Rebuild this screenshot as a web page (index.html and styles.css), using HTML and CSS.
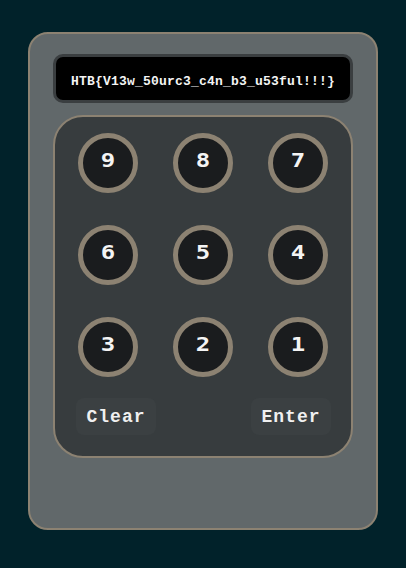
FILE: index.html
```html
<!DOCTYPE html>
<html>
<head>
<meta charset="utf-8">
<link rel="stylesheet" href="styles.css">
</head>
<body>
<div class="device">
  <div class="display"><span class="flag">HTB{V13w_50urc3_c4n_b3_u53ful!!!}</span></div>
  <div class="pad">
    <div class="keys">
      <button class="key"><span class="digit">9</span></button>
      <button class="key"><span class="digit">8</span></button>
      <button class="key"><span class="digit">7</span></button>
      <button class="key"><span class="digit">6</span></button>
      <button class="key"><span class="digit">5</span></button>
      <button class="key"><span class="digit">4</span></button>
      <button class="key"><span class="digit">3</span></button>
      <button class="key"><span class="digit">2</span></button>
      <button class="key"><span class="digit">1</span></button>
    </div>
    <div class="actions">
      <button class="action">Clear</button>
      <button class="action">Enter</button>
    </div>
  </div>
</div>
</body>
</html>
```
FILE: styles.css
```css
html, body {
  margin: 0;
  padding: 0;
  background: #01222a;
}
body {
  height: 568px;
  overflow: hidden;
}
.device {
  box-sizing: border-box;
  width: 350px;
  height: 498px;
  margin: 32px auto 0;
  background: #61686a;
  border: 2px solid #8c8272;
  border-radius: 20px;
  padding: 20px 23px;
}
.display {
  box-sizing: border-box;
  height: 49px;
  background: #000;
  border: 3px solid #3a3e40;
  border-radius: 10px;
  display: flex;
  align-items: center;
  justify-content: center;
  padding-top: 5px;
}
.flag {
  font-family: "Liberation Mono", "DejaVu Sans Mono", monospace;
  font-weight: bold;
  font-size: 13px;
  letter-spacing: 0.2px;
  color: #f4f4f4;
}
.pad {
  box-sizing: border-box;
  margin-top: 12px;
  background: #373c3e;
  border: 2px solid #8c8272;
  border-radius: 30px;
  padding: 16px 22px 21px 23px;
}
.keys {
  display: grid;
  grid-template-columns: repeat(3, 60px);
  column-gap: 35px;
  row-gap: 32px;
}
.key {
  box-sizing: border-box;
  width: 60px;
  height: 60px;
  border-radius: 50%;
  border: 5px solid #8c8272;
  background: #1a1c1e;
  color: #f4f4f4;
  font-family: "DejaVu Sans Mono", "Liberation Mono", monospace;
  font-weight: bold;
  font-size: 20px;
  padding: 0 0 6px;
  display: flex;
  align-items: center;
  justify-content: center;
}
.digit {
  display: inline-block;
  transform: scaleX(1.2);
}
.actions {
  margin: 21px -2px 0;
  display: flex;
  justify-content: space-between;
}
.action {
  box-sizing: border-box;
  width: 80px;
  height: 37px;
  border: none;
  border-radius: 8px;
  background: #3b4042;
  color: #f0f0f0;
  font-family: "Liberation Mono", "DejaVu Sans Mono", monospace;
  font-weight: bold;
  font-size: 18px;
  letter-spacing: 1px;
  padding: 0;
}
```
